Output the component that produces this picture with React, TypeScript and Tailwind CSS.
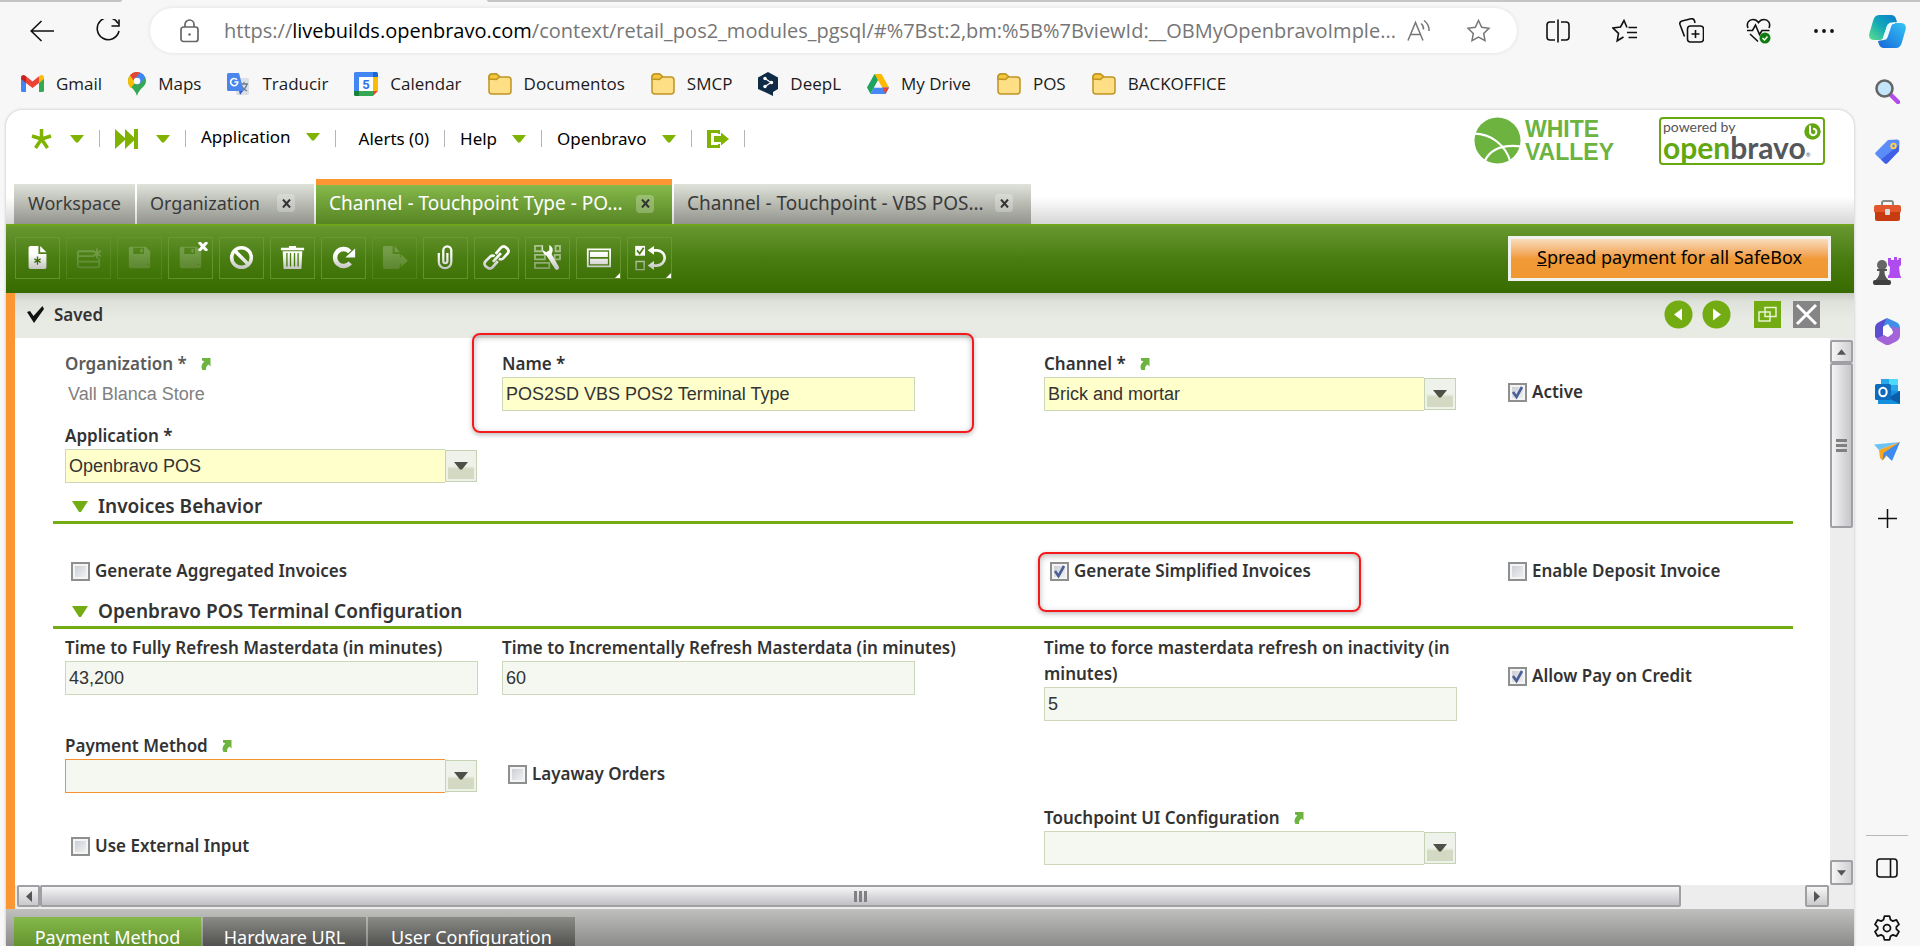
import { useId } from "react";
import type { ReactNode } from "react";

const UI = "font-['Noto_Sans','Open_Sans',sans-serif]";

/* ---------- small shared pieces ---------- */

const Caret = () => (
  <svg width="14" height="8" viewBox="0 0 14 8">
    <path d="M0 0h14L8 7.500H6z" fill="#7fb300" />
  </svg>
);

const Sep = () => <span className="h-[17px] w-px bg-[#b5b5b5]" />;

const Folder = () => (
  <svg width="24" height="22" viewBox="0 0 24 22">
    <path
      d="M1 4a3 3 0 0 1 3-3h4.500l3.500 3H20a3 3 0 0 1 3 3v11a3 3 0 0 1-3 3H4a3 3 0 0 1-3-3z"
      fill="#ffdf85"
      stroke="#bf9423"
      strokeWidth="1.500"
    />
    <path
      d="M1 6V4a3 3 0 0 1 3-3h4.500l3 2.500L8.500 6.500z"
      fill="#f4c63c"
      stroke="#bf9423"
      strokeWidth="1.500"
    />
  </svg>
);

const LinkArrow = () => (
  <svg width="11" height="12" viewBox="0 0 11 12">
    <path d="M2 0h8.500v8.500L8.500 6.500C7 7.500 5.500 9.500 6 12H2.500C.5 8.500 2 5.500 4.500 3.500L2 2.500z" fill="#6cb33f" />
  </svg>
);

/* ---------- browser chrome ---------- */

const bookmarks: { name: string; icon: ReactNode }[] = [
  {
    name: "Gmail",
    icon: (
      <svg width="23" height="17" viewBox="0 0 23 17">
        <path d="M0 2.500 5 6.500V17H1.500A1.500 1.500 0 0 1 0 15.500z" fill="#4285f4" />
        <path d="M23 2.500 18 6.500V17h3.500a1.500 1.500 0 0 0 1.500-1.500z" fill="#34a853" />
        <path d="M5 1.300 11.500 6.500 18 1.300V8l-6.500 5L5 8z" fill="#ea4335" />
        <path d="M0 2.500C0 .3 2.500-.7 4.300.7L5 1.300V8L0 4z" fill="#c5221f" />
        <path d="M23 2.500c0-2.200-2.500-3.200-4.300-1.800l-.7.600V8l5-4z" fill="#fbbc04" />
      </svg>
    ),
  },
  {
    name: "Maps",
    icon: (
      <svg width="18" height="24" viewBox="0 0 18 24">
        <path d="M9 0a9 9 0 0 1 9 9c0 6-7 7-9 15C7 16 0 15 0 9a9 9 0 0 1 9-9z" fill="#34a853" />
        <path d="M0 9a9 9 0 0 1 2-5.700L9 9l-6.500 7C1 14 0 12 0 9z" fill="#fbbc04" />
        <path d="M2 3.300A9 9 0 0 1 12 .6L5.500 8.500z" fill="#ea4335" />
        <path d="M12 .6A9 9 0 0 1 17.300 5.500L11 13 6 8z" fill="#4285f4" />
        <circle cx="9" cy="9" r="3.300" fill="#fff" />
      </svg>
    ),
  },
  {
    name: "Traducir",
    icon: (
      <svg width="23" height="24" viewBox="0 0 23 24">
        <rect x="9" y="6" width="13" height="17" rx="1.500" fill="#dcdfe3" />
        <path d="M13 12h8M17 10v2M20 12c-1 4-3.500 6-6 7.500M14.500 13.500c1 2.500 3 4.500 5.500 5.500" stroke="#6b7f94" strokeWidth="1.300" fill="none" />
        <path d="M12 19h4l-3 4z" fill="#3a5bcc" />
        <path d="M1.500 1H12l4.500 18H1.500A1.500 1.500 0 0 1 0 17.500v-15A1.500 1.500 0 0 1 1.500 1z" fill="#4a86ee" />
        <path d="M10 7.800A3.600 3.600 0 1 0 10.800 10H7.500" stroke="#fff" strokeWidth="1.600" fill="none" />
      </svg>
    ),
  },
  {
    name: "Calendar",
    icon: (
      <svg width="24" height="24" viewBox="0 0 24 24">
        <rect width="24" height="24" rx="1.500" fill="#fff" />
        <path d="M0 1.500A1.500 1.500 0 0 1 1.500 0H19v5H5v14H0z" fill="#4285f4" />
        <path d="M19 0h3.500A1.500 1.500 0 0 1 24 1.500V5h-5z" fill="#1967d2" />
        <path d="M19 5h5v14h-5z" fill="#fbbc04" />
        <path d="M5 19h14v5H5z" fill="#34a853" />
        <path d="M0 19h5v5H1.500A1.500 1.500 0 0 1 0 22.500z" fill="#188038" />
        <path d="M19 19h5l-5 5z" fill="#ea4335" />
        <text x="12" y="16.500" textAnchor="middle" fontSize="13" fontWeight="700" fontFamily="Roboto, sans-serif" fill="#2f74e8">
          5
        </text>
      </svg>
    ),
  },
  { name: "Documentos", icon: <Folder /> },
  { name: "SMCP", icon: <Folder /> },
  {
    name: "DeepL",
    icon: (
      <svg width="20" height="24" viewBox="0 0 20 24">
        <path d="M10 0l10 5.500v11.500L15 20v4l-5-2.500L0 17V5.500z" fill="#0f2b46" />
        <path d="M7 6.500 13 10.500 7 14.500" stroke="#fff" strokeWidth="1.200" fill="none" />
        <circle cx="7" cy="6.500" r="1.700" fill="#fff" />
        <circle cx="13.500" cy="10.500" r="1.700" fill="#fff" />
        <circle cx="7" cy="14.500" r="1.700" fill="#fff" />
      </svg>
    ),
  },
  {
    name: "My Drive",
    icon: (
      <svg width="22" height="20" viewBox="0 0 22 20">
        <path d="M7.500 0h7L3.500 20 0 13.500z" fill="#1ea362" />
        <path d="M7.500 0h7L22 13.500h-7z" fill="#ffba00" />
        <path d="M7 13.500h15L18.500 20h-15z" fill="#4688f4" />
        <path d="M15.500 13.500H22L18.500 20z" fill="#ea4335" />
        <path d="M11 6.500l4 7H7z" fill="#f7f7f7" />
      </svg>
    ),
  },
  { name: "POS", icon: <Folder /> },
  { name: "BACKOFFICE", icon: <Folder /> },
];

const starPath = "M12 1.500l3.200 6.700 7.300 1-5.300 5.200 1.300 7.300-6.500-3.500-6.500 3.500 1.300-7.300L1.500 9.200l7.300-1z";

const AddressRow = () => (
  <div className="flex h-[45px] items-center pr-[19px]">
    <button aria-label="Back" className="ml-[30px] w-6">
      <svg width="24" height="22" viewBox="0 0 24 22" fill="none" stroke="#111" strokeWidth="1.600">
        <path d="M24 11H1M11.500 1 1.200 11l10.300 10" />
      </svg>
    </button>
    <button aria-label="Reload" className="ml-[42px] w-6">
      <svg width="24" height="24" viewBox="0 0 24 24" fill="none" stroke="#111" strokeWidth="1.600">
        <path d="M22 4.500A11 11 0 1 0 23 12M23 .5V7h-7.500" />
      </svg>
    </button>
    <div className="ml-[30px] flex h-[45px] min-w-0 flex-1 items-center rounded-full bg-white pr-[26px] pl-[30px] shadow-[0_0_4px_#0000001a]">
      <svg width="19" height="24" viewBox="0 0 19 24" fill="none" stroke="#666" strokeWidth="1.700" className="shrink-0">
        <rect x="1" y="8" width="17" height="14.500" rx="2.500" />
        <path d="M5 8V5.500a4.500 4.500 0 0 1 9 0V8" />
        <circle cx="9.500" cy="15.500" r="1.200" fill="#666" stroke="none" />
      </svg>
      <div className="ml-[25px] min-w-0 flex-1 overflow-hidden text-[20px] leading-8 whitespace-nowrap text-[#767676]">
        https://<span className="text-black">livebuilds.openbravo.com</span>
        /context/retail_pos2_modules_pgsql/#%7Bst:2,bm:%5B%7BviewId:__OBMyOpenbravoImple...
      </div>
      <button aria-label="Read aloud" className="mr-[35px] ml-1">
        <svg width="24" height="24" viewBox="0 0 24 24" fill="none" stroke="#767676" strokeWidth="1.500">
          <path d="M1 21.500 8.500 3.500 16 21.500M3.500 15.500h10M14 4.500c2 1.500 2.700 3.500 2.500 6M17 1.500c4 3 5.500 6 5 10.500" />
        </svg>
      </button>
      <button aria-label="Add to favorites">
        <svg width="25" height="24" viewBox="0 0 24 24" fill="none" stroke="#767676" strokeWidth="1.500">
          <path d={starPath} />
        </svg>
      </button>
    </div>
    <div className="ml-[29px] flex items-center gap-[42px]">
      <button aria-label="Split screen">
        <svg width="24" height="24" viewBox="0 0 24 24" fill="none" stroke="#111" strokeWidth="1.600">
          <path d="M9 3H4a3 3 0 0 0-3 3v12a3 3 0 0 0 3 3h5M15 3h5a3 3 0 0 1 3 3v12a3 3 0 0 1-3 3h-5M12 .5v23" />
        </svg>
      </button>
      <button aria-label="Favorites">
        <svg width="25" height="24" viewBox="0 0 25 24" fill="none" stroke="#111" strokeWidth="1.600">
          <path d="M15 8.500 12 1.500 8.500 8l-7.500 1 5.500 5.300-1.300 7.500L11.500 18M16.500 8.500H25M15 13.500h10M16.500 18.500H25" />
        </svg>
      </button>
      <button aria-label="Collections">
        <svg width="25" height="25" viewBox="0 0 25 25" fill="none" stroke="#111" strokeWidth="1.600">
          <rect x="8.500" y="8" width="16" height="16" rx="3" />
          <path d="M16.500 12v8M12.500 16h8M5.500 18.500 1 6.500C.5 5 1.500 3.500 3 3l9-2.200c1.500-.3 3 .5 3.500 2L16 5" />
        </svg>
      </button>
      <button aria-label="Browser essentials">
        <svg width="25" height="26" viewBox="0 0 25 26" fill="none" stroke="#111" strokeWidth="1.600">
          <path d="M2 10C0 5 3 1.500 7 1.500c2.500 0 4.500 1.500 5.500 3 1-1.500 3-3 5.500-3 4 0 7 3.500 5 8.500M4 16l8 7.500M1 12.500h5.500l3-5.500 4 9.500 2.500-4h7.500" />
          <circle cx="19" cy="20" r="5.500" fill="#107c10" stroke="none" />
          <path d="M16.500 20l2 2 3-3.500" stroke="#fff" strokeWidth="1.500" />
        </svg>
      </button>
      <button aria-label="More">
        <svg width="22" height="6" viewBox="0 0 22 6" fill="#111">
          <circle cx="3" cy="3" r="1.900" />
          <circle cx="11" cy="3" r="1.900" />
          <circle cx="19" cy="3" r="1.900" />
        </svg>
      </button>
    </div>
  </div>
);

const sideIcons: { name: string; icon: ReactNode }[] = [
  {
    name: "Copilot",
    icon: (
      <svg width="37" height="33" viewBox="0 0 37 33">
        <defs>
          <linearGradient id="cpA" x1="0" y1="1" x2="1" y2="0">
            <stop offset="0" stopColor="#5fe08a" />
            <stop offset="0.500" stopColor="#12a8b8" />
            <stop offset="1" stopColor="#0a7bd0" />
          </linearGradient>
          <linearGradient id="cpB" x1="0" y1="1" x2="1" y2="0">
            <stop offset="0" stopColor="#1666d8" />
            <stop offset="1" stopColor="#35c5f5" />
          </linearGradient>
        </defs>
        <path d="M10 0h12c4 0 5 3 6 7l-5 1c-3 0-4 1-5 4l-3 9c-1 3-2 4-5 4H6c-4 0-7-2-5.500-7L4 6c1-4 3-6 6-6z" fill="url(#cpA)" />
        <path d="M27 33H15c-4 0-5-3-6-7l5-1c3 0 4-1 5-4l3-9c1-3 2-4 5-4h4c4 0 7 2 5.500 7L33 27c-1 4-3 6-6 6z" fill="url(#cpB)" />
        <path d="M13 25c2-1 3-2 4-5l3-8c.8-2.500 2-4 6-4h-3c-3 0-4 1-5 4l-3 9c-.5 2-1 3-2 4z" fill="#e9fbff" stroke="#e9fbff" />
      </svg>
    ),
  },
  {
    name: "Search",
    icon: (
      <svg width="25" height="25" viewBox="0 0 25 25">
        <path d="M16 16l7 7" stroke="#b44be8" strokeWidth="4.500" strokeLinecap="round" />
        <circle cx="9.500" cy="9.500" r="8" fill="#c5e6fa" stroke="#666" strokeWidth="2.600" />
      </svg>
    ),
  },
  {
    name: "Shopping",
    icon: (
      <svg width="25" height="25" viewBox="0 0 25 25">
        <path d="M13 1l9-.5c1.500 0 2.500 1 2.500 2.500L24 12 12.500 24c-1 1-2 1-3 0L1 16c-1-1-1-2 0-3z" fill="#5b8cf8" />
        <path d="M24 12 12.500 24c-1 1-2 1-3 0L6 20.500 24 6z" fill="#3f5fe6" />
        <circle cx="18.500" cy="7" r="3.200" fill="#ffd24a" />
        <circle cx="18.500" cy="7" r="1.400" fill="#7a8cc8" />
      </svg>
    ),
  },
  {
    name: "Tools",
    icon: (
      <svg width="27" height="22" viewBox="0 0 27 22">
        <path d="M8 6V3a2 2 0 0 1 2-2h7a2 2 0 0 1 2 2v3" fill="none" stroke="#8a8a8a" strokeWidth="2" />
        <rect y="5" width="27" height="8" rx="2" fill="#e2582c" />
        <path d="M1 12h25v7a2 2 0 0 1-2 2H3a2 2 0 0 1-2-2z" fill="#c63c10" />
        <rect x="11" y="9" width="5" height="6" rx="1" fill="#d8dde2" />
      </svg>
    ),
  },
  {
    name: "Games",
    icon: (
      <svg width="28" height="28" viewBox="0 0 28 28">
        <path d="M15 1h3v2h3V0h3v3h1.500V1H28v7l-2 2 1 8 1 2v1H15v-2l1.500-2 .5-7-2-2z" fill="#b04bf0" />
        <circle cx="9" cy="8" r="5" fill="#666" />
        <path d="M4 12h10v2h-2.500c0 4 1 6 3.500 8.500V24H3v-1.500C5.500 20 6.500 18 6.500 14H4z" fill="#555" />
        <rect y="23" width="18" height="5" rx="2" fill="#3f3f3f" />
      </svg>
    ),
  },
  {
    name: "Microsoft 365",
    icon: (
      <svg width="25" height="27" viewBox="0 0 25 27">
        <path d="M12 0 21 4c2.500 1 4 3 4 6v7l-8-5-4-6-6 3z" fill="#3f8fe8" />
        <path d="M12 0 4 4C1 5.500 0 7.500 0 10v8c0 2 2 3 4 2l4-2V9z" fill="#5b4fcf" />
        <path d="M25 11v6c0 3-1 4.500-3 6l-7 3.500c-2 .8-3.500.8-5 0L3 22.500C1 21 1 20 3 20l6-3 4 2 5-4-1-7z" fill="#a463d8" />
        <path d="M12.500 8.500l4.500 2.500v5l-4.500 3-4.500-3v-5z" fill="#fff" />
      </svg>
    ),
  },
  {
    name: "Outlook",
    icon: (
      <svg width="25" height="25" viewBox="0 0 25 25">
        <path d="M6 0h17v12H6z" fill="#28a8ea" />
        <path d="M14 0h9v6h-9z" fill="#50d9ff" />
        <path d="M3 11l22 1v13H3z" fill="#1490df" />
        <path d="M25 12 13 19l12 6z" fill="#0a5da8" />
        <rect y="5" width="16" height="16" rx="1.500" fill="#0f6cbd" />
        <ellipse cx="8" cy="13" rx="3.700" ry="4.200" fill="none" stroke="#fff" strokeWidth="2" />
      </svg>
    ),
  },
  {
    name: "Drop",
    icon: (
      <svg width="26" height="19" viewBox="0 0 26 19">
        <path d="M0 2.500 26 0 5 8z" fill="#6cc4f5" />
        <path d="M5 8 26 0 8.500 18.500 6 16z" fill="#f5a623" />
        <path d="M26 0 18 19l-6-6-3.500 5.500L9.500 11z" fill="#3d8af0" />
      </svg>
    ),
  },
];

const Sidebar = () => (
  <aside className="flex w-[66px] shrink-0 flex-col items-center pt-px">
    {sideIcons.map((item) => (
      <button key={item.name} aria-label={item.name} className="flex h-[60px] w-full items-center justify-center">
        {item.icon}
      </button>
    ))}
    <button aria-label="Customize" className="mt-1 flex h-[66px] w-full items-center justify-center">
      <svg width="19" height="19" viewBox="0 0 19 19" stroke="#111" strokeWidth="1.500">
        <path d="M9.500 0v19M0 9.500h19" />
      </svg>
    </button>
    <div className="mt-auto w-[42px] border-t border-[#b8b8b8]" />
    <button aria-label="Hide sidebar" className="mt-6 flex h-4 items-center">
      <svg width="22" height="20" viewBox="0 0 22 20" fill="none" stroke="#111" strokeWidth="1.600">
        <rect x="1" y="1" width="20" height="18" rx="3" />
        <path d="M14.500 1v18" />
      </svg>
    </button>
    <button aria-label="Settings" className="mt-[38px] mb-[4px]">
      <svg width="28" height="28" viewBox="0 0 24 24" fill="none" stroke="#111" strokeWidth="1.500">
        <circle cx="12" cy="12" r="3" />
        <path d="M9.800 1.800h4.400l.8 3.200 2 1.100 3.100-1 2.200 3.800-2.300 2.200v1.800l2.300 2.200-2.200 3.800-3.100-1-2 1.100-.8 3.200H9.800L9 19l-2-1.100-3.100 1-2.200-3.800L4 12.900v-1.800L1.700 8.900l2.200-3.800 3.100 1L9 5z" strokeLinejoin="round" />
      </svg>
    </button>
  </aside>
);

/* ---------- Openbravo header ---------- */

const Logos = () => (
  <div className="mr-[29px] flex items-start gap-[45px] pt-[7px]">
    <div className="flex items-center gap-1">
      <svg width="47" height="47" viewBox="0 0 48 48">
        <circle cx="24" cy="24" r="23.500" fill="#6cb33f" />
        <path d="M0 17c18 0 32 12 37 28M11 45c6-13 20-17 37-15" fill="none" stroke="#fff" strokeWidth="2.200" />
      </svg>
      <div className="font-['Liberation_Sans',Arial,sans-serif] text-[23px] leading-[23px] font-bold text-[#6cb33f]">
        <div>WHITE</div>
        <div>VALLEY</div>
      </div>
    </div>
    <div className="relative h-12 w-[166px] rounded-sm border-2 border-[#67a70f] pl-0.5 font-['Lato',sans-serif]">
      <div className="text-[14px] leading-[16px] text-[#555]">powered by</div>
      <div className="flex text-[30px] leading-[24px] font-bold text-[#55585a]">
        <span className="text-[#62a70f]">open</span>bravo
        <span className="self-end text-[6px] leading-[8px] font-normal">®</span>
      </div>
      <svg className="absolute top-1 right-0.5" width="17" height="17" viewBox="0 0 17 17">
        <circle cx="8.500" cy="8.500" r="8.200" fill="#62a70f" />
        <path d="M6 2.500V9a3.200 3.200 0 1 0 3-3.200" fill="none" stroke="#fff" strokeWidth="2" />
      </svg>
    </div>
  </div>
);

const MenuBar = () => (
  <div className="flex justify-between">
    <nav className="flex h-[57px] items-center gap-[15px] pl-[25px] text-[17px] text-black">
      <button aria-label="Create new" className="flex items-center gap-[18px]">
        <svg width="21" height="20" viewBox="0 0 21 20" stroke="#7fb300" strokeWidth="3.500">
          <path d="M10.500 10V0M10.500 10 1 7M10.500 10 20 7M10.500 10 4.500 19M10.500 10l6 9" />
        </svg>
        <Caret />
      </button>
      <Sep />
      <button aria-label="Quick launch" className="flex items-center gap-[18px]">
        <svg width="23" height="20" viewBox="0 0 23 20" fill="#7fb300">
          <path d="M0 0l10 9V0l9 8.500V0h4v20h-4v-8.500L10 20v-9L0 20z" />
        </svg>
        <Caret />
      </button>
      <Sep />
      <button className="flex items-center gap-[15px] pb-[3px]">
        Application
        <Caret />
      </button>
      <Sep />
      <button className="pl-2">Alerts (0)</button>
      <Sep />
      <button className="flex items-center gap-[15px]">
        Help
        <Caret />
      </button>
      <Sep />
      <button className="flex items-center gap-[15px]">
        Openbravo
        <Caret />
      </button>
      <Sep />
      <button aria-label="Log out">
        <svg width="22" height="18" viewBox="0 0 22 18" fill="#7fb300">
          <path d="M0 0h13v4h-2V3H4v12h7v-1h2v4H0z" />
          <path d="M7 6h7V2.500L22 9l-8 6.500V12H7z" />
        </svg>
      </button>
      <Sep />
    </nav>
    <Logos />
  </div>
);

const TabClose = () => (
  <span className="flex size-[18px] items-center justify-center rounded-sm bg-white/25 text-[#333]">
    <svg width="9" height="9" viewBox="0 0 9 9" stroke="currentColor" strokeWidth="2">
      <path d="M1 .5l7 8M8 .5l-7 8" />
    </svg>
  </span>
);

const Tabs = () => (
  <div className="mt-auto flex items-end gap-0.5 bg-[linear-gradient(#fff0_40%,#d6d6d6)] pl-2 text-[18px] text-[#3a3a3a]">
    <button className="h-10 w-[121px] bg-linear-to-b from-[#e0e3da] to-[#92948d] pb-0.5">Workspace</button>
    <button className="flex h-10 w-[177px] items-center justify-between bg-linear-to-b from-[#e0e3da] to-[#92948d] pr-[19px] pb-0.5 pl-[13px]">
      Organization
      <TabClose />
    </button>
    <button className="flex h-[45px] w-[356px] items-center justify-between border-t-[6px] border-[#fb9633] bg-linear-to-b from-[#86b94b] to-[#578523] pr-[18px] pb-0.5 pl-[13px] text-[19px] text-white">
      Channel - Touchpoint Type - PO...
      <TabClose />
    </button>
    <button className="flex h-10 w-[357px] items-center justify-between bg-linear-to-b from-[#e0e3da] to-[#92948d] pr-[18px] pb-0.5 pl-[13px] text-[19px]">
      Channel - Touchpoint - VBS POS...
      <TabClose />
    </button>
  </div>
);

/* ---------- toolbar ---------- */

const steel = "url(#steel)";

const toolIcons: { name: string; off?: boolean; menu?: boolean; icon: ReactNode }[] = [
  {
    name: "New",
    icon: (
      <>
        <path d="M6 1h9v9h9v15a2 2 0 0 1-2 2H6a2 2 0 0 1-2-2V3a2 2 0 0 1 2-2z" />
        <path d="M17 1l7 7h-7z" />
        <path d="M14 13v9M10.500 15.500l7 4M17.500 15.500l-7 4" stroke="#3f7008" strokeWidth="1.500" />
      </>
    ),
  },
  {
    name: "Insert row",
    off: true,
    icon: (
      <>
        <path d="M20 7H4a2 2 0 0 0-2 2v14a2 2 0 0 0 2 2h20a2 2 0 0 0 2-2v-8M2 12.500h18M2 18.500h24" fill="none" stroke={steel} strokeWidth="2" />
        <path d="M23.500 4v11M19 6.500l9 6M28 6.500l-9 6" stroke={steel} strokeWidth="2" />
      </>
    ),
  },
  {
    name: "Save",
    off: true,
    icon: <path d="M4 2h17l5 5v17a2 2 0 0 1-2 2H4a2 2 0 0 1-2-2V4a2 2 0 0 1 2-2zM7 3v7h12V3zM15 4.500h2.500v4H15zM23 21h1.500v1.500H23z" fillRule="evenodd" />,
  },
  {
    name: "Save and close",
    off: true,
    icon: <path d="M4 2h17l5 5v17a2 2 0 0 1-2 2H4a2 2 0 0 1-2-2V4a2 2 0 0 1 2-2zM7 3v7h12V3zM15 4.500h2.500v4H15zM22 21h1.500v1.500H22z" fillRule="evenodd" />,
  },
  {
    name: "Cancel",
    icon: (
      <g fill="none" stroke={steel} strokeWidth="4">
        <circle cx="14" cy="14" r="11" />
        <path d="M6.500 6.500l15 15" />
      </g>
    ),
  },
  {
    name: "Delete",
    icon: (
      <>
        <path d="M1 3h9V1h8v2h9v3H1z" />
        <path d="M3 7h22l-1 20H4zM7 9v15h1.500V9zM11 9v15h1.500V9zM15.500 9v15H17V9zM19.500 9v15H21V9z" fillRule="evenodd" />
      </>
    ),
  },
  {
    name: "Refresh",
    icon: (
      <>
        <path d="M21.500 20a9.500 9.500 0 1 1-.5-12.500" fill="none" stroke={steel} strokeWidth="5" />
        <path d="M27 4v10H16z" />
      </>
    ),
  },
  { name: "Export", off: true, icon: <path d="M3 1h9v9h8v4h1v-4l8 7.500-8 7.500v-4h-1v4a2 2 0 0 1-2 2H3a2 2 0 0 1-2-2V3a2 2 0 0 1 2-2zM14 1l6 7h-6z" /> },
  {
    name: "Attachment",
    icon: (
      <path
        d="M6.500 9v10a7 7 0 0 0 14 0V6a4.500 4.500 0 0 0-9 0v12a2.300 2.300 0 0 0 4.600 0V9"
        fill="none"
        stroke={steel}
        strokeWidth="2.500"
      />
    ),
  },
  {
    name: "Link",
    icon: (
      <g fill="none" stroke={steel} strokeWidth="3">
        <path d="M13 10l6-7c2-2 4-2 6 0l1 1c2 2 2 4 0 6l-4.500 5c-1.500 1.500-3 1.500-5 .5M15.500 18l-6 7c-2 2-4 2-6 0l-1.500-1c-2-2-2-4 0-6l5-5c1.500-1.500 3-1.500 5-.5M10 19l9-10" />
      </g>
    ),
  },
  {
    name: "Configure",
    icon: (
      <>
        <path d="M0 1h8v6H0zM28 1h-5v6h5zM0 11h11v5H0zM28 16h-6v-5h6zM16 20v6H0v-6z" fill="none" stroke={steel} strokeWidth="2" opacity=".5" />
        <path d="M9 0v6l3.500 2L16 6V0c4 2 5 6 2.500 10L27 25c0 3-3 4-4.500 2L13 12C9 11 7 4 9 0z" />
      </>
    ),
  },
  {
    name: "Form view",
    menu: true,
    icon: (
      <>
        <path d="M1 4h27v21H1zM3 6v17h23V6z" fillRule="evenodd" />
        <path d="M4.500 7.500h20v6h-20zM4.500 15.500h20v6h-20z" />
      </>
    ),
  },
  {
    name: "Process",
    menu: true,
    icon: (
      <>
        <path d="M-2 1H9v11H-2z" />
        <path d="M0 6l3 3.500L7.500 3" fill="none" stroke="#4a7d12" strokeWidth="2" />
        <path d="M-1 18.500H8v9H-1z" fill="none" stroke={steel} strokeWidth="1.500" opacity=".7" />
        <path d="M18 6h4.500a8.500 8.500 0 0 1 0 17H18" fill="none" stroke={steel} strokeWidth="3" />
        <path d="M12 6l7-5v10zM12 23l7-5v10z" />
      </>
    ),
  },
];

const Toolbar = () => (
  <div className="flex h-[69px] shrink-0 items-center justify-between border-t-2 border-[#6fa51c] bg-linear-to-b from-[#68982f] via-[#487c10] to-[#376a00] pr-[23px] pb-[3px] pl-[9px]">
    <svg className="absolute size-0">
      <linearGradient id="steel" gradientUnits="userSpaceOnUse" x1="0" y1="2" x2="0" y2="28">
        <stop offset="0.300" stopColor="#fff" />
        <stop offset="1" stopColor="#bfc0bd" />
      </linearGradient>
    </svg>
    <div className="flex gap-1.5">
      {toolIcons.map((t) => (
        <button
          key={t.name}
          aria-label={t.name}
          className={"relative flex h-[42px] w-[45px] items-center justify-center border pb-0.5 " + (t.off && t.name !== "Save and close" ? "border-[#6d9a35]/40" : "border-[#6d9a35]/80")}
        >
          <svg width="25" height="25" viewBox="0 0 28 28" fill={steel} overflow="visible" className={t.off ? "opacity-20" : ""}>
            {t.icon}
          </svg>
          {t.name === "Save and close" && (
            <svg className="absolute top-1 right-1" width="10" height="9" viewBox="0 0 10 9" stroke="#fff" strokeWidth="3">
              <path d="M1 0l8 9M9 0L1 9" />
            </svg>
          )}
          {t.menu && (
            <svg className="absolute right-0 bottom-0" width="5" height="5" viewBox="0 0 5 5">
              <path d="M5 0v5H0z" fill="#fff" />
            </svg>
          )}
        </button>
      ))}
    </div>
    <button className="h-[45px] w-[323px] border-[3px] border-[#f1f1ee] bg-linear-to-b from-[#f9dcbb] via-[#f09a38] via-50% to-[#f09830] pb-0.5 text-[18px] text-black">
      <span className="underline">S</span>pread payment for all SafeBox
    </button>
  </div>
);

const StatusBar = () => (
  <div className="flex h-[45px] shrink-0 items-center bg-[linear-gradient(#c9cbc5,#dfe1db_20%,#e8eae4_60%)] pr-[34px] pb-0.5 pl-3">
    <svg width="17" height="17" viewBox="0 0 17 17">
      <path d="M0 6l3-1 3.500 5L15.500 0 17 3 7 17z" fill="#111" />
    </svg>
    <span className="ml-[10px] text-[17px] font-semibold text-[#333]">Saved</span>
    <div className="ml-auto flex items-center">
      <button aria-label="Previous record">
        <svg width="29" height="29" viewBox="0 0 29 29">
          <circle cx="14.500" cy="14.500" r="14" fill="#72ac12" />
          <path d="M18 8.500v12l-8-6z" fill="#fff" />
        </svg>
      </button>
      <button aria-label="Next record" className="ml-[9px]">
        <svg width="29" height="29" viewBox="0 0 29 29">
          <circle cx="14.500" cy="14.500" r="14" fill="#72ac12" />
          <path d="M11 8.500v12l8-6z" fill="#fff" />
        </svg>
      </button>
      <button aria-label="Maximize" className="ml-[23px] size-[27px] bg-[#72ac12]">
        <svg width="27" height="27" viewBox="0 0 27 27" fill="none" stroke="#e7f2d2" strokeWidth="1.500">
          <path d="M11 6.500h11v9H11zM5 11h11v9H5z" />
        </svg>
      </button>
      <button aria-label="Close" className="ml-3 size-[27px] bg-[#858585]">
        <svg width="27" height="27" viewBox="0 0 27 27" stroke="#fff" strokeWidth="3">
          <path d="M4 4l19 19M23 4 4 23" />
        </svg>
      </button>
    </div>
  </div>
);

/* ---------- form ---------- */

type FieldProps = {
  label: string;
  value?: string;
  kind?: "text" | "select" | "readonly";
  required?: boolean;
  link?: boolean;
  focused?: boolean;
  children?: ReactNode;
};

const Field = ({ label, value = "", kind = "text", required, link, focused, children }: FieldProps) => {
  const id = useId();
  const color = (required ? "bg-[#ffffcc] " : "bg-[#f5f7f1] ") + (focused ? "border-[#f7912e]" : "border-[#cdd8bb]");
  return (
    <div className="relative">
      <div className="flex items-center gap-[13px]">
        <label
          htmlFor={id}
          className={
            "text-[17px] leading-[26px] font-semibold " +
            (kind === "readonly" ? "text-[#5a5a5a]" : "text-[#333]") +
            (kind === "text" && value === "5" ? " max-w-[430px]" : "")
          }
        >
          {label}
          {required || kind === "readonly" ? " *" : ""}
        </label>
        {link && (
          <a href="#" aria-label={"Open " + label}>
            <LinkArrow />
          </a>
        )}
      </div>
      {kind === "select" && (
        <div className="flex h-[34px] max-w-[412px] items-center">
          <select
            id={id}
            defaultValue={value}
            className={"h-full min-w-0 flex-1 appearance-none border border-r-0 pl-[3px] font-['Liberation_Sans',Arial,sans-serif] text-[18px] text-[#333] outline-none " + color}
          >
            <option>{value}</option>
          </select>
          <button
            type="button"
            aria-label={"Show " + label + " options"}
            className="flex h-8 w-8 items-center justify-center border border-[#c6d2b4] bg-linear-to-b from-[#eff2ea] from-50% to-[#d3d9c3] to-60% inset-ring-2 inset-ring-[#eef2e8]"
          >
            <svg width="14" height="8" viewBox="0 0 14 8">
              <path d="M0 0h14L8 7.500H6z" fill="#4d5145" />
            </svg>
          </button>
        </div>
      )}
      {kind === "text" && (
        <input
          id={id}
          defaultValue={value}
          className={"block h-[34px] w-full max-w-[413px] border pl-[3px] font-['Liberation_Sans',Arial,sans-serif] text-[18px] text-[#333] outline-none " + color}
        />
      )}
      {kind === "readonly" && (
        <input
          id={id}
          readOnly
          defaultValue={value}
          className="block h-[34px] w-full max-w-[413px] pl-[3px] font-['Liberation_Sans',Arial,sans-serif] text-[18px] text-[#808080] outline-none"
        />
      )}
      {children}
    </div>
  );
};

const Check = ({ label, checked, children }: { label: string; checked?: boolean; children?: ReactNode }) => (
  <div className="relative pt-7 pl-1.5">
    <label className="flex items-center gap-[5px] text-[17px] leading-[26px] font-semibold text-[#333]">
      <span className="relative flex size-[19px] shrink-0">
        <input
          type="checkbox"
          defaultChecked={checked}
          className="peer size-[19px] appearance-none border-2 border-[#8e8f8f] bg-linear-to-br from-[#c5c9d2] to-[#f6f6f6] inset-ring-2 inset-ring-[#f4f4f4]"
        />
        <svg className="pointer-events-none absolute inset-0 hidden peer-checked:block" width="19" height="19" viewBox="0 0 19 19">
          <path d="M5 9l3.500 5L14 4" fill="none" stroke="#4a5f97" strokeWidth="2.600" />
        </svg>
      </span>
      {label}
    </label>
    {children}
  </div>
);

const Section = ({ title }: { title: string }) => (
  <h2 className="mt-2 mr-[37px] -ml-3 flex h-[33px] items-center gap-[10px] border-b-[3px] border-[#74ac14] pl-[19px] text-[19px] font-semibold text-[#333]">
    <svg width="16" height="11" viewBox="0 0 16 11">
      <path d="M0 0h16L9 11H7z" fill="#74ac14" />
    </svg>
    {title}
  </h2>
);

const Row = ({ className = "", children }: { className?: string; children: ReactNode }) => (
  <div className={"grid grid-cols-[437fr_542fr_458fr_328fr] gap-y-3 " + className}>{children}</div>
);

const frame = "pointer-events-none absolute rounded-lg border-2 border-[#f3191c] shadow-[0_2px_5px_#0004,inset_0_2px_6px_#0004]";

const Form = () => (
  <form className="min-w-0 flex-1 bg-white pt-[13px] pl-[50px]">
    <Row>
      <Field label="Organization" value="Vall Blanca Store" kind="readonly" link />
      <Field label="Name" value="POS2SD VBS POS2 Terminal Type" required>
        <div className={frame + " -top-[18px] -left-[30px] h-[100px] w-[502px]"} />
      </Field>
      <Field label="Channel" value="Brick and mortar" kind="select" required link />
      <Check label="Active" checked />
      <Field label="Application" value="Openbravo POS" kind="select" required />
    </Row>
    <Section title="Invoices Behavior" />
    <Row className="pt-1.5 pb-1">
      <Check label="Generate Aggregated Invoices" />
      <span />
      <Check label="Generate Simplified Invoices" checked>
        <div className={frame + " top-[22px] -left-1.5 h-[60px] w-[323px]"} />
      </Check>
      <Check label="Enable Deposit Invoice" />
    </Row>
    <Section title="Openbravo POS Terminal Configuration" />
    <Row className="pt-1.5">
      <Field label="Time to Fully Refresh Masterdata (in minutes)" value="43,200" />
      <Field label="Time to Incrementally Refresh Masterdata (in minutes)" value="60" />
      <Field label="Time to force masterdata refresh on inactivity (in minutes)" value="5" />
      <Check label="Allow Pay on Credit" checked />
      <Field label="Payment Method" kind="select" link focused />
      <Check label="Layaway Orders" />
      <span />
      <span />
      <Check label="Use External Input" />
      <span />
      <Field label="Touchpoint UI Configuration" kind="select" link />
    </Row>
  </form>
);

/* ---------- scrollbars ---------- */

const scrollPart = "flex items-center justify-center rounded-xs border-2 border-[#a0a0a4]";

const VScroll = () => (
  <div className="flex w-6 shrink-0 flex-col bg-[#ededed] pt-0.5 pr-px">
    <button type="button" aria-label="Scroll up" className={scrollPart + " h-[23px] bg-linear-to-r from-[#f6f6f6] to-[#d0d0d3]"}>
      <svg width="9" height="6" viewBox="0 0 10 6">
        <path d="M0 6h10L5 0z" fill="#555" />
      </svg>
    </button>
    <div className={scrollPart + " h-[165px] flex-col gap-0.5 bg-linear-to-r from-[#f4f4f5] to-[#c6c6ca]"}>
      <span className="h-[3px] w-[11px] bg-[#808080]" />
      <span className="h-[3px] w-[11px] bg-[#808080]" />
      <span className="h-[3px] w-[11px] bg-[#808080]" />
    </div>
    <button type="button" aria-label="Scroll down" className={scrollPart + " mt-auto h-[25px] bg-linear-to-r from-[#f6f6f6] to-[#d0d0d3]"}>
      <svg width="9" height="6" viewBox="0 0 10 6">
        <path d="M0 0h10L5 6z" fill="#555" />
      </svg>
    </button>
  </div>
);

const HScroll = () => (
  <div className="flex h-6 shrink-0 bg-[#ededed] pr-[25px] pb-0.5 pl-0.5">
    <button type="button" aria-label="Scroll left" className={scrollPart + " w-[23px] bg-linear-to-b from-[#f6f6f6] to-[#c9c9cc]"}>
      <svg width="6" height="11" viewBox="0 0 6 11">
        <path d="M6 0v11L0 5.500z" fill="#555" />
      </svg>
    </button>
    <div className="flex flex-1">
      <div className={scrollPart + " w-[93%] gap-0.5 bg-linear-to-b from-[#f6f6f7] to-[#c0c0c5]"}>
        <span className="h-[11px] w-[3px] bg-[#808080]" />
        <span className="h-[11px] w-[3px] bg-[#808080]" />
        <span className="h-[11px] w-[3px] bg-[#808080]" />
      </div>
    </div>
    <button type="button" aria-label="Scroll right" className={scrollPart + " w-6 bg-linear-to-b from-[#f6f6f6] to-[#c9c9cc]"}>
      <svg width="6" height="11" viewBox="0 0 6 11">
        <path d="M0 0v11l6-5.500z" fill="#555" />
      </svg>
    </button>
  </div>
);

const App = () => {
  return (
    <div className={"flex h-screen overflow-hidden bg-[#f7f7f7] " + UI}>
      <div className="flex min-w-0 flex-1 flex-col">
        {/* bottom edge of the browser tab strip */}
        <div className="flex h-2 shrink-0 items-start">
          <span className="h-0.5 w-[122px] rounded-br bg-[#c4c4c4]" />
          <span className="w-[365px]" />
          <span className="-mr-[66px] h-0.5 flex-1 rounded-bl bg-[#c4c4c4]" />
        </div>
        <div className="font-['Open_Sans',sans-serif]">
          <AddressRow />
          <nav className="flex h-[57px] items-center gap-[26px] pt-1 pl-[21px] text-[17px] text-[#1b1b1b]">
            {bookmarks.map((b) => (
              <a key={b.name} href="#" className="flex items-center gap-3">
                {b.icon}
                {b.name}
              </a>
            ))}
          </nav>
        </div>

        <main className="ml-1.5 flex min-h-0 flex-1 flex-col rounded-t-2xl bg-white shadow-[0_0_3px_#00000040]">
          <div className="flex h-[114px] shrink-0 flex-col">
            <MenuBar />
            <Tabs />
          </div>
          <Toolbar />
          <div className="flex min-h-0 flex-1 flex-col border-l-[9px] border-[#fb9633]">
            <StatusBar />
            <div className="flex min-h-0 flex-1">
              <Form />
              <VScroll />
            </div>
            <HScroll />
          </div>
          <div className="flex h-[37px] shrink-0 items-start gap-0.5 overflow-hidden bg-linear-to-b from-[#c0c0be] to-[#8b8b89] pt-2 pl-2 text-[18px] text-white">
            <button className="h-10 w-[187px] bg-linear-to-b from-[#86b94b] to-[#578523]">Payment Method</button>
            <button className="h-10 w-[163px] bg-linear-to-b from-[#8b8c88] to-[#3d3d3b]">Hardware URL</button>
            <button className="h-10 w-[207px] bg-linear-to-b from-[#8b8c88] to-[#3d3d3b]">User Configuration</button>
          </div>
        </main>
      </div>
      <Sidebar />
    </div>
  );
};

export default App;
